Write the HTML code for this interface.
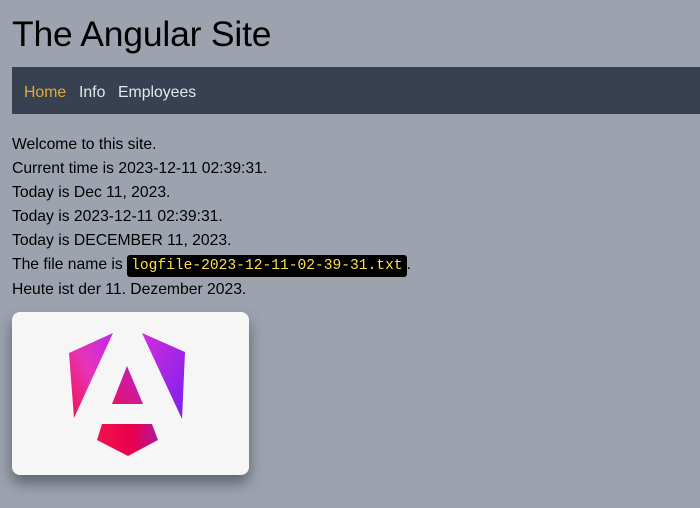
<!DOCTYPE html>
<html><head><style>
html,body{margin:0;padding:0;background:#9ca3af;width:700px;height:508px;overflow:hidden}
body{font-family:"Liberation Sans",sans-serif;color:#000}
h1{position:absolute;left:12px;top:12px;margin:0;font-weight:400;font-size:35.5px;line-height:44px;letter-spacing:-0.2px}
nav{position:absolute;left:12px;top:67px;width:688px;height:47px;background:#374151;font-size:15.8px}
nav span{position:absolute;top:16px;line-height:20px;color:#e5e7eb}
.lines{position:absolute;left:12px;top:133px;font-size:15.7px;line-height:24px}
.lines div{height:24px;white-space:nowrap}
code{font-family:"Liberation Mono",monospace;background:#000;color:#fde047;font-size:14.6px;padding:3px 4px;border-radius:3px}
.card{position:absolute;left:12px;top:312px;width:237px;height:163px;background:#f6f6f6;border-radius:8px;box-shadow:0 8px 14px rgba(40,45,60,.55)}
svg{position:absolute;left:0;top:0}
</style></head><body>
<h1>The Angular Site</h1>
<nav><span style="left:12px;color:#e4a83a">Home</span><span style="left:67px">Info</span><span style="left:106px">Employees</span></nav>
<div class="lines">
<div>Welcome to this site.</div>
<div>Current time is 2023-12-11 02:39:31.</div>
<div>Today is Dec 11, 2023.</div>
<div>Today is 2023-12-11 02:39:31.</div>
<div>Today is DECEMBER 11, 2023.</div>
<div style="height:25px">The file name is <code>logfile-2023-12-11-02-39-31.txt</code>.</div>
<div>Heute ist der 11. Dezember 2023.</div>
</div>
<div class="card"></div>
<svg width="700" height="508">
<defs>
<linearGradient id="g1" x1="0" y1="1" x2="1" y2="0"><stop offset="0" stop-color="#f0134a"/><stop offset=".5" stop-color="#e833b8"/><stop offset="1" stop-color="#c028e8"/></linearGradient>
<linearGradient id="g2" x1="0" y1="0" x2="1" y2="1"><stop offset="0" stop-color="#d42dd8"/><stop offset="1" stop-color="#7b1ff0"/></linearGradient>
<linearGradient id="g3" x1="0" y1="1" x2="1" y2="0"><stop offset="0" stop-color="#e6106a"/><stop offset="1" stop-color="#b822c8"/></linearGradient>
<linearGradient id="g4" x1="0" y1="0" x2="1" y2="0"><stop offset="0" stop-color="#f0124a"/><stop offset=".6" stop-color="#e80050"/><stop offset="1" stop-color="#b01a9c"/></linearGradient>
</defs>
<polygon points="69,353 113,333 74,418" fill="url(#g1)"/>
<polygon points="142,333 185,352 182,419" fill="url(#g2)"/>
<polygon points="127,366 112,404 143,404" fill="url(#g3)"/>
<polygon points="102,424 152,424 158,440 128,456 97,440" fill="url(#g4)"/>
</svg>
</body></html>
